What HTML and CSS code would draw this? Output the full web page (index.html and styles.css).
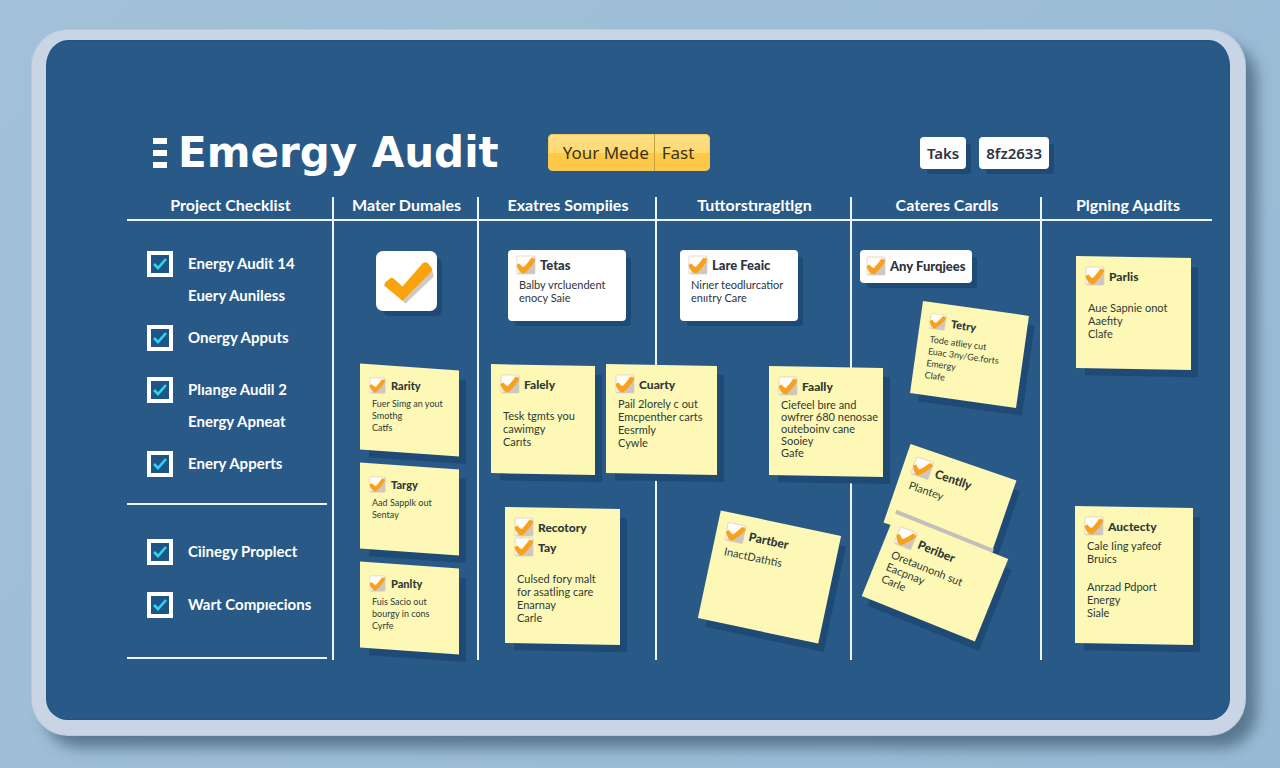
FILE: index.html
```html
<!DOCTYPE html>
<html lang="en">
<head>
    <meta charset="UTF-8">
    <meta name="viewport" content="width=device-width, initial-scale=1.0">
    <title>Emergy Audit</title>
    <link rel="stylesheet" href="styles.css">
</head>
<body>

<!-- shared check icon -->
<svg class="defs" aria-hidden="true">
    <defs>
        <linearGradient id="box" x1="0" y1="0" x2="1" y2="1">
            <stop offset="0.45" stop-color="#fffdf8"/>
            <stop offset="0.6" stop-color="#cfc6bd"/>
        </linearGradient>
    </defs>
    <symbol id="check" viewBox="0 0 20 20">
        <rect x="1" y="1" width="18" height="18" rx="1" fill="url(#box)" stroke="#d8cdbb" stroke-width="0.7"/>
        <path d="M0.5 10 L3.5 8.5 Q6 12 8 12 Q11 9 15.5 2.5 L19.5 4.5 Q15 13 8 18.5 Q2 17 0.5 10 Z" fill="#f9a11b"/>
    </symbol>
</svg>

<main class="board">
    <header class="top">
        <button class="menu" aria-label="Menu"><span></span><span></span><span></span></button>
        <h1>Emergy Audit</h1>
        <div class="split">
            <button>Your Mede</button>
            <button>Fast</button>
        </div>
        <div class="tags">
            <button>Taks</button>
            <button>8fz2633</button>
        </div>
    </header>

    <div class="heads">
        <h2>Project Checklist</h2>
        <h2>Mater Dumales</h2>
        <h2>Exatres Sompiies</h2>
        <h2>Tuttorstıragltlgn</h2>
        <h2>Cateres Cardls</h2>
        <h2>Plgning Aµdits</h2>
    </div>

    <div class="lanes">
        <section class="lane checklist">
            <ul>
                <li><input type="checkbox" id="c1" checked><label for="c1">Energy Audit 14<br>Euery Auniless</label></li>
                <li class="single"><input type="checkbox" id="c2" checked><label for="c2">Onergy Apputs</label></li>
                <li><input type="checkbox" id="c3" checked><label for="c3">Plıange Audil 2<br>Energy Apneat</label></li>
                <li class="single"><input type="checkbox" id="c4" checked><label for="c4">Enery Apperts</label></li>
            </ul>
            <ul class="second">
                <li><input type="checkbox" id="c5" checked><label for="c5">Cìinegy Proplect</label></li>
                <li><input type="checkbox" id="c6" checked><label for="c6">Wart Compıecions</label></li>
            </ul>
        </section>

        <section class="lane narrow">
            <div class="badge">
                <svg viewBox="0 0 60 60" aria-hidden="true">
                    <path d="M22 45 L29 52 L57 25 L55 18 Z" fill="#cfcac6"/>
                    <path d="M8 34 L9 31 L15 26 Q17 26 26 35 L46 12 Q49 10 51 12 L55 17 Q56 19 54 21 L26 49 Z" fill="#fba30c"/>
                </svg>
            </div>
            <div class="stack">
                <article class="note small">
                    <h3><svg><use href="#check"/></svg>Rarity</h3>
                    <p>Fuer Simg an yout<br>Smothg<br>Catfs</p>
                </article>
                <article class="note small">
                    <h3><svg><use href="#check"/></svg>Targy</h3>
                    <p>Aad Sapplk out<br>Sentay</p>
                </article>
                <article class="note small">
                    <h3><svg><use href="#check"/></svg>Panlty</h3>
                    <p>Fuis Sacio out<br>bourgy in cons<br>Cyrfe</p>
                </article>
            </div>
        </section>

        <section class="lane">
            <article class="card indent">
                <h3><svg><use href="#check"/></svg>Tetas</h3>
                <p>Balby vrcluendent<br>enocy Saie</p>
            </article>
            <article class="note pin falely">
                <h3><svg><use href="#check"/></svg>Falely</h3>
                <p class="low">Tesk tgmts you<br>cawimgy<br>Carıts</p>
            </article>
            <article class="note pin cuarty">
                <h3><svg><use href="#check"/></svg>Cuarty</h3>
                <p>Pail 2lorely c out<br>Emcpenther carts<br>Eesrmly<br>Cywle</p>
            </article>
            <article class="note pin recotory">
                <h3><svg><use href="#check"/></svg>Recotory</h3>
                <h3><svg><use href="#check"/></svg>Tay</h3>
                <p class="low">Culsed fory malt<br>for asatling care<br>Enarnay<br>Carle</p>
            </article>
        </section>

        <section class="lane">
            <article class="card">
                <h3><svg><use href="#check"/></svg>Lare Feaic</h3>
                <p>Nirıer teodlurcatior<br>enııtry Care</p>
            </article>
            <article class="note pin faally">
                <h3><svg><use href="#check"/></svg>Faally</h3>
                <p class="tight">Ciefeel bıre and<br>owfrer 680 nenosae<br>outeboinv cane<br>Sooiey<br>Gafe</p>
            </article>
            <article class="note pin tilted parther">
                <h3><svg><use href="#check"/></svg>Partber</h3>
                <p>InactDathtis</p>
            </article>
        </section>

        <section class="lane">
            <article class="card tag">
                <h3><svg><use href="#check"/></svg>Any Furqjees</h3>
            </article>
            <article class="note small pin tilted tetry">
                <h3><svg><use href="#check"/></svg>Tetry</h3>
                <p>Tode atliey cut<br>Euac 3ny/Ge.forts<br>Emergy<br>Clafe</p>
            </article>
            <article class="note pin tilted centlly">
                <h3><svg><use href="#check"/></svg>Centlly</h3>
                <p>Plantey</p>
            </article>
            <article class="note pin tilted periber">
                <h3><svg><use href="#check"/></svg>Periber</h3>
                <p>Oretaunonh sut<br>Eacpnay<br>Carle</p>
            </article>
        </section>

        <section class="lane">
            <article class="note pin parlis">
                <h3><svg><use href="#check"/></svg>Parlis</h3>
                <p class="low">Aue Sapnie onot<br>Aaefıty<br>Clafe</p>
            </article>
            <article class="note pin auctecty">
                <h3><svg><use href="#check"/></svg>Auctecty</h3>
                <p>Cale Iing yafeof<br>Bruics</p>
                <p class="low">Anrzad Pdport<br>Energy<br>Siale</p>
            </article>
        </section>
    </div>
</main>

</body>
</html>
```
FILE: styles.css
```css
* {
    box-sizing: border-box;
}

body {
    margin: 0;
    padding: 30px 35px 33px 32px;
    min-height: 100vh;
    background: linear-gradient(135deg, #a2c1d9, #98bad4);
    font-family: Lato, "Open Sans", sans-serif;
    color: #2b3440;
}

h1, h2, h3, p, ul {
    margin: 0;
    padding: 0;
}

button {
    border: none;
    padding: 0;
    font-family: inherit;
    color: inherit;
    background: none;
    cursor: pointer;
}

.defs {
    position: absolute;
    width: 0;
    height: 0;
}

.board {
    min-height: calc(100vh - 63px);
    padding: 94px 18px 59px 81px;
    background: #295a87;
    border: solid #c9d5e4;
    border-width: 10px 15px 15px 14px;
    border-radius: 36px;
    box-shadow: inset 0 0 2px #1e4c78, 0 0 0 1px #b4cbdf, 12px 13px 14px rgba(55, 85, 108, 0.65);
}

/* header */
.top {
    display: flex;
    align-items: center;
    height: 37px;
    padding: 0 163px 0 26px;
}

.menu {
    display: grid;
    gap: 6px;
    width: 14px;
    margin-right: 11px;
}

.menu span {
    height: 6px;
    background: #fff;
}

h1 {
    font: 700 42px/37px "DejaVu Sans", Verdana, sans-serif;
    color: #fff;
    white-space: nowrap;
}

.split {
    display: flex;
    margin-left: 49px;
    height: 37px;
    border-radius: 5px;
    background: linear-gradient(#ffe08a, #ffd970 50%, #ffca45 51%, #fdc84c);
    box-shadow: inset 0 0 1px 1px #f5c75a;
}

.split button {
    padding: 0 5px 0 15px;
    font: 400 17px "Noto Sans", sans-serif;
    color: #3a3420;
}

.split button + button {
    padding: 0 16px 0 7px;
    border-left: 1px solid #c99f3c;
}

.tags {
    display: flex;
    gap: 13px;
    margin-left: auto;
}

.tags button {
    height: 32px;
    padding: 0 7px;
    border-radius: 4px;
    background: #fff;
    box-shadow: 6px 6px 0 -1px #1f4a75;
    font: 600 15px "Noto Sans", sans-serif;
}

/* columns */
.heads, .lanes {
    display: grid;
    grid-template-columns: 207fr 145fr 178fr 195fr 190fr 170fr;
}

.heads {
    margin-top: 26px;
    border-bottom: 2px solid #edf4fa;
}

.heads h2 {
    height: 22px;
    padding-left: 2px;
    font-size: 16px;
    line-height: 15px;
    font-weight: 700;
    text-align: center;
    color: #fff;
    white-space: nowrap;
    border-right: 2px solid #edf4fa;
}

.heads h2:last-child, .lane:last-child {
    border-right: none;
}

.lane {
    position: relative;
    min-height: 439px;
    padding: 29px 0 0 23px;
    border-right: 2px solid #edf4fa;
}

/* checklist */
.checklist {
    padding: 26px 5px 0 0;
}

.checklist ul {
    list-style: none;
    border-bottom: 2px solid #edf4fa;
}

.checklist li {
    display: flex;
    align-items: flex-start;
    gap: 15px;
    padding-left: 20px;
    margin-bottom: 10px;
    font-size: 15px;
    line-height: 32px;
    font-weight: 700;
    color: #fff;
}

.checklist .single {
    padding-bottom: 10px;
}

.checklist ul:first-child {
    padding-bottom: 4px;
}

.checklist .second {
    padding: 30px 0 26px;
}

.checklist .second li {
    margin-bottom: 21px;
}

.checklist .second li:last-child {
    margin-bottom: 11px;
}

.checklist input {
    appearance: none;
    width: 26px;
    height: 26px;
    margin: 4px 0 0;
    border: 4px solid #fff;
    background: #1f5584;
}

.checklist input:checked {
    background: #1f5584 url("data:image/svg+xml,%3Csvg xmlns='http://www.w3.org/2000/svg' viewBox='0 0 18 18'%3E%3Cpath d='M3 9 L7 13 L15 4' fill='none' stroke='%232fd4f5' stroke-width='2.6'/%3E%3C/svg%3E") center / 18px no-repeat;
}

/* white cards */
.badge, .card {
    background: #fff;
    border-radius: 4px;
    box-shadow: 6px 6px 0 -1px #1f4a75;
}

.badge {
    width: 61px;
    height: 60px;
    border-radius: 7px;
    margin-left: 16px;
}

.card {
    width: 118px;
    min-height: 71px;
    padding: 5px 4px 8px 8px;
}

.indent {
    margin-left: 6px;
}

.tag {
    width: 112px;
    min-height: 33px;
    margin-left: -15px;
    padding: 6px 4px 4px 6px;
}

h3 {
    display: flex;
    align-items: center;
    gap: 4px;
    height: 20px;
    font-size: 12px;
    font-weight: 900;
    white-space: nowrap;
}

.card h3 {
    font-size: 13px;
}

h3 svg {
    flex: none;
    width: 20px;
    height: 20px;
}

p {
    padding: 3px 0 0 3px;
    font-size: 11px;
    line-height: 13px;
    white-space: nowrap;
}

/* sticky notes, the paper is drawn behind the text */
.note {
    position: relative;
    z-index: 1;
    padding: 9px 0 0 9px;
    color: #2f3a35;
}

.note::before {
    content: "";
    position: absolute;
    inset: 0;
    z-index: -1;
    background: #fdf8b6;
    box-shadow: 8px 8px 0 -1px #1f4a75;
    transform: skewY(1deg);
}

.note p.low {
    padding-top: 15px;
}

.note p.tight {
    line-height: 12px;
}

.narrow {
    padding: 30px 0 0 26px;
}

.stack {
    display: grid;
    gap: 13px;
    margin-top: 56px;
}

.small {
    padding-top: 8px;
}

.stack .note {
    width: 99px;
    height: 86px;
}

.stack .note::before {
    transform: skewY(4deg);
}

.small h3 {
    font-size: 11px;
    gap: 5px;
}

.small h3 svg {
    width: 17px;
    height: 17px;
}

.small p {
    font-size: 9px;
    line-height: 12px;
}

/* places on the board */
.pin {
    position: absolute;
}

.pin.tilted::before {
    transform: none;
}

.falely { left: 12px; top: 144px; width: 104px; height: 109px; }
.cuarty { left: 127px; top: 144px; width: 111px; height: 109px; }
.recotory { left: 26px; top: 287px; width: 115px; height: 136px; }
.faally { left: 112px; top: 146px; width: 114px; height: 109px; }
.parther { left: 51px; top: 301px; width: 123px; height: 110px; transform: rotate(12deg); }
.tetry { left: 64px; top: 87px; width: 107px; height: 93px; transform: rotate(8deg); }
.centlly { left: 42px; top: 239px; width: 112px; height: 83px; transform: rotate(19deg); }
.periber { left: 22px; top: 312px; width: 122px; height: 89px; transform: rotate(22deg); }
.parlis { left: 34px; top: 36px; width: 115px; height: 112px; }
.auctecty { left: 33px; top: 286px; width: 118px; height: 137px; }

/* folded edge of the upper note */
.periber::after {
    content: "";
    position: absolute;
    left: 0;
    top: -4px;
    width: 105px;
    height: 4px;
    background: #c3c0bb;
}
```
